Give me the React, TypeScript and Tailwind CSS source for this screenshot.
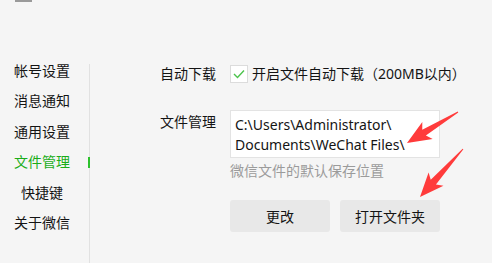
import React from "react";

const navItems = ["帐号设置", "消息通知", "通用设置", "文件管理", "快捷键", "关于微信"];

// annotation arrow drawn pointing right, then rotated into place
const Arrow = ({ x, y, angle, length }: { x: number; y: number; angle: number; length: number }) => {
  const L = length;
  const pts = [
    [0, -0.5],
    [L - 20, -3.5],
    [L - 24, -10],
    [L, 0],
    [L - 24, 10],
    [L - 20, 3.5],
    [0, 0.5],
  ]
    .map((p) => p.join(","))
    .join(" ");
  return <polygon points={pts} fill="#ff3b3b" transform={`translate(${x} ${y}) rotate(${angle})`} />;
};

const App = () => {
  return (
    <div className="relative flex w-[492px] h-[263px] overflow-hidden bg-[#f5f5f5] text-[#141414] font-['Noto_Sans','Noto_Sans_CJK_SC',sans-serif]">
      {/* cut-off bit at the top edge */}
      <div className="absolute left-[15px] top-0 w-[17px] h-[2px] bg-[#9a9a9a]" />

      {/* left menu */}
      <div className="w-[84px] pt-[55px] flex flex-col text-[14px]">
        {navItems.map((item) => (
          <div
            key={item}
            className={`h-[30.5px] flex items-center justify-center ${item === "文件管理" ? "text-[#1aad19]" : ""}`}
          >
            {item}
          </div>
        ))}
      </div>

      {/* divider with active marker */}
      <div className="relative ml-[5px] mt-[64px] w-px bg-[#e1e1e1]">
        <div className="absolute left-[-1px] top-[93px] w-[2px] h-[11px] bg-[#2dc12d]" />
      </div>

      {/* settings content */}
      <div className="ml-[70px] pt-[65px] text-[14px]">
        <div className="flex items-center h-[18px]">
          <div className="w-[70px] leading-[20px]">自动下载</div>
          <div className="w-[18px] h-[18px] border border-[#dcdcdc] bg-white flex items-center justify-center">
            <svg width="12" height="10" viewBox="0 0 12 10">
              <path d="M1 5 L4.5 8.5 L11 1.5" fill="none" stroke="#4cc34c" strokeWidth="1.4" />
            </svg>
          </div>
          <div className="ml-[4px] leading-[20px] whitespace-nowrap">开启文件自动下载（200MB以内）</div>
        </div>

        <div className="flex mt-[27px]">
          <div className="w-[70px] mt-[2px] leading-[20px]">文件管理</div>
          <div>
            <div className="w-[210px] h-[48px] border border-[#e3e3e3] bg-white px-[4px] pt-[4px] leading-[20px] whitespace-nowrap">
              <div>C:\Users\Administrator\</div>
              <div>Documents\WeChat Files\</div>
            </div>
            <div className="mt-[3px] leading-[20px] text-[#9b9b9b]">微信文件的默认保存位置</div>
            <div className="flex gap-[10px] mt-[19px]">
              <button className="w-[100px] h-[32px] rounded-[3px] bg-[#e8e8e8] text-[14px]">更改</button>
              <button className="w-[100px] h-[32px] rounded-[3px] bg-[#e8e8e8] text-[14px]">打开文件夹</button>
            </div>
          </div>
        </div>
      </div>

      {/* red annotation arrows */}
      <svg className="absolute inset-0 pointer-events-none" width="492" height="263">
        <Arrow x={458} y={112} angle={148.7} length={59.7} />
        <Arrow x={463} y={149} angle={131.9} length={64.4} />
      </svg>
    </div>
  );
};

export default App;
